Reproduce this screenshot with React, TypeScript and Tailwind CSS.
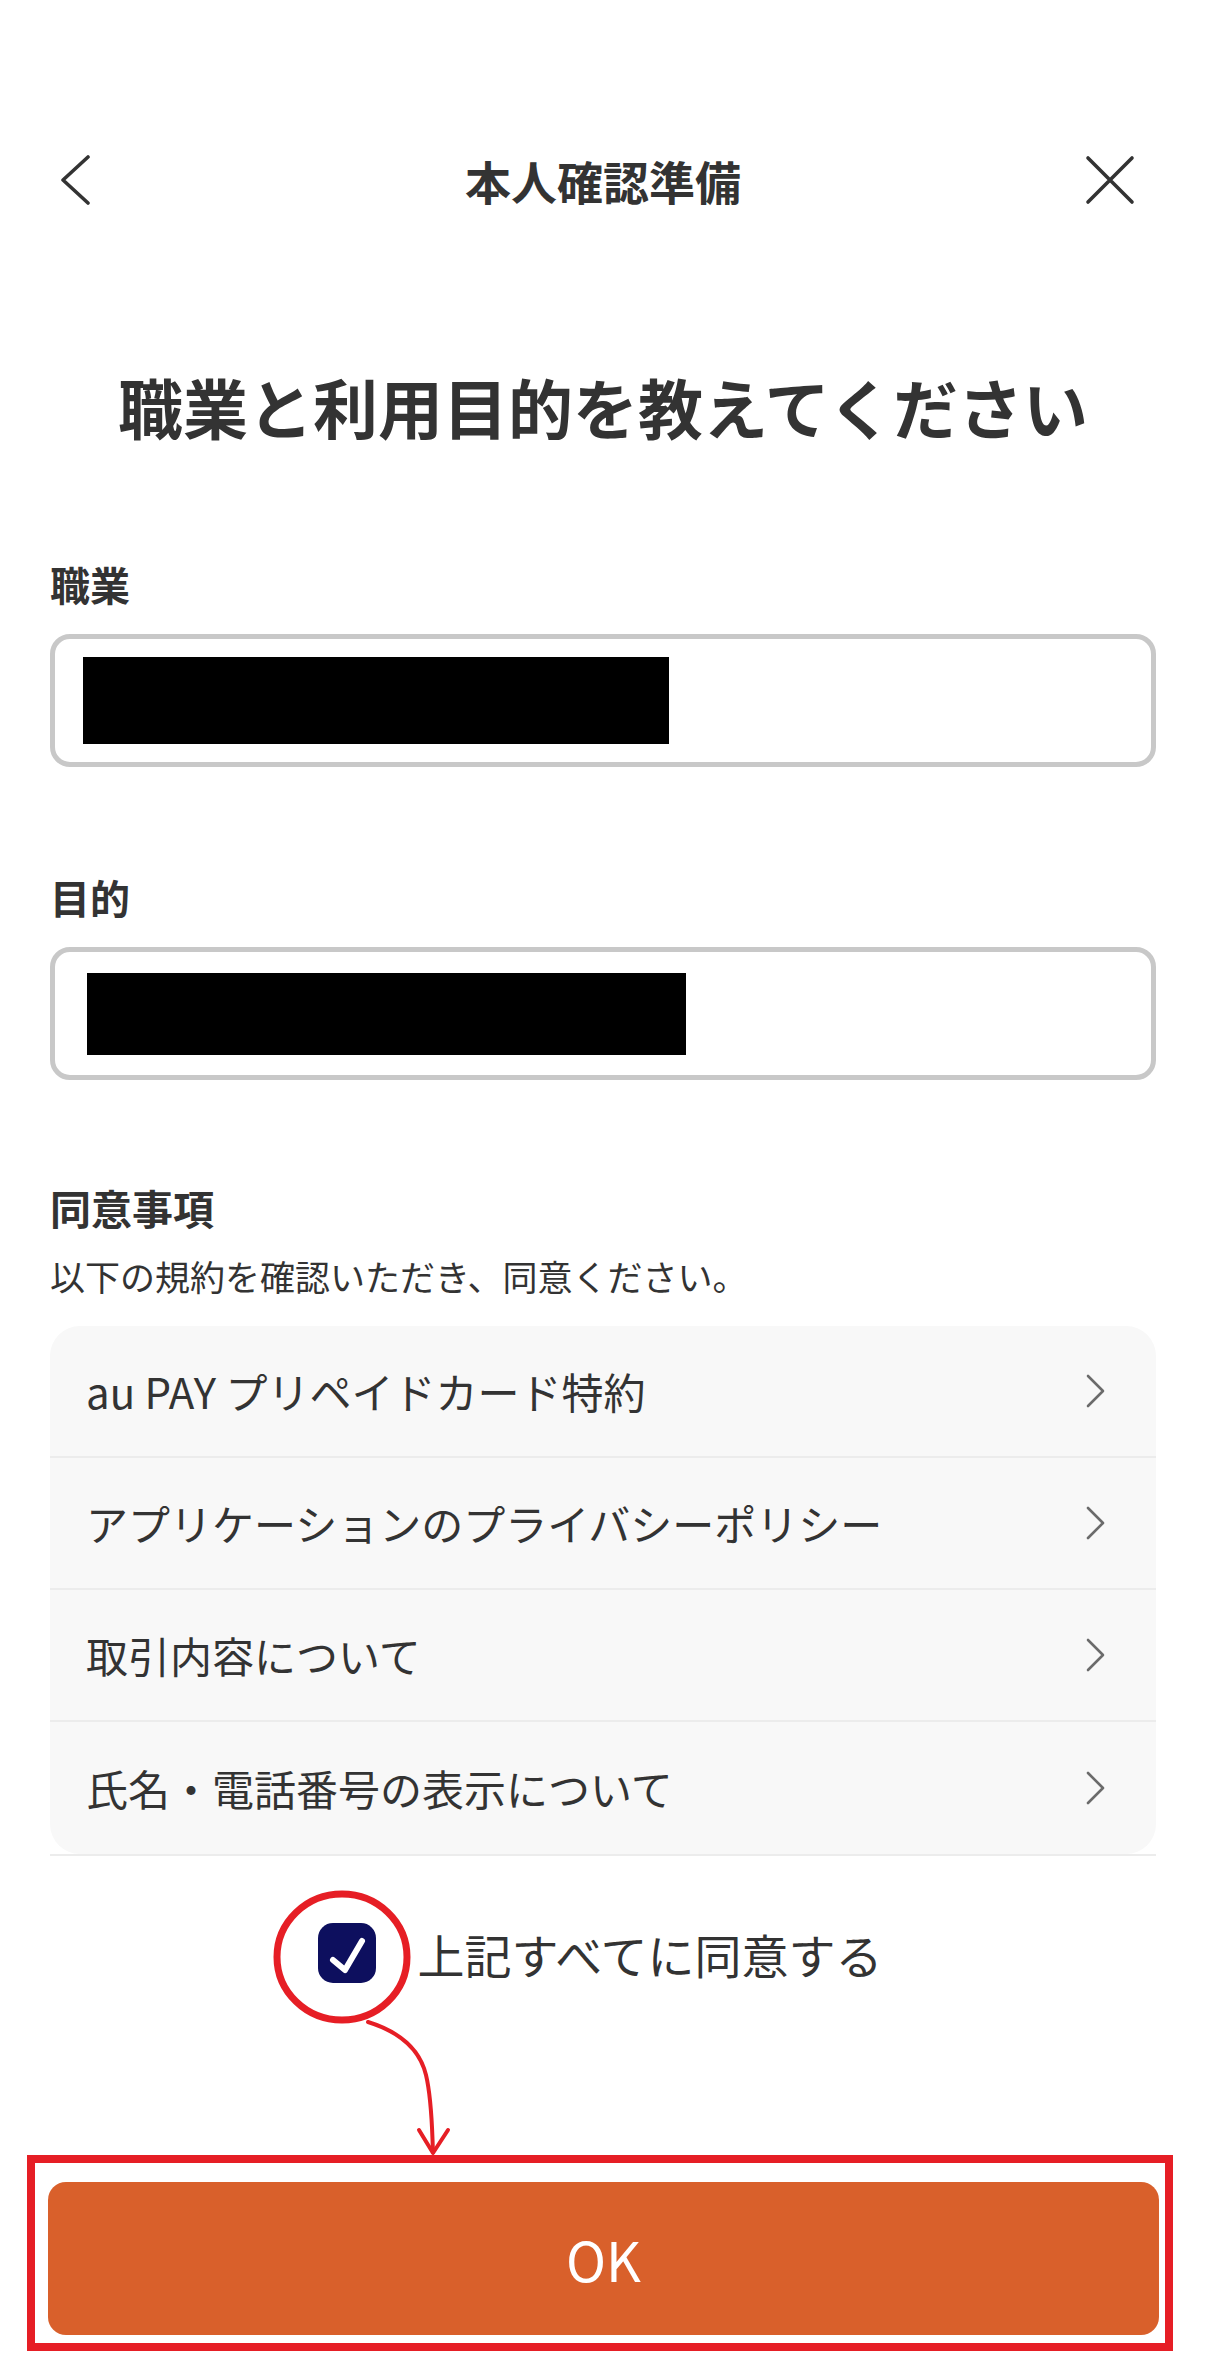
import React, { useState } from "react";

// Terms rows shown in the agreement card
const terms = [
  "au PAY プリペイドカード特約",
  "アプリケーションのプライバシーポリシー",
  "取引内容について",
  "氏名・電話番号の表示について",
];

const ChevronRight = () => (
  <svg width="22" height="34" viewBox="0 0 22 34" fill="none">
    <path d="M3 2 L18 17 L3 32" stroke="#6b6b6b" strokeWidth="2.6" strokeLinecap="round" strokeLinejoin="round" />
  </svg>
);

const TermRow: React.FC<{ label: string; last?: boolean }> = ({ label, last }) => (
  <div
    className={
      "flex items-center justify-between h-[132px] pl-[36px] pr-[49px] " +
      (last ? "" : "border-b-[2px] border-[#ececec]")
    }
  >
    <span className="text-[42px] leading-[42px]">{label}</span>
    <ChevronRight />
  </div>
);

const FormField: React.FC<{ label: string; boxW: string; boxH: string; pl: string }> = ({
  label,
  boxW,
  boxH,
  pl,
}) => (
  <div>
    <p className="text-[40px] leading-[40px] font-bold">{label}</p>
    <div className={"mt-[30px] h-[133px] rounded-[20px] border-[5px] border-[#c8c8c8] flex items-center " + pl}>
      {/* masked value */}
      <div className={"bg-black " + boxW + " " + boxH} />
    </div>
  </div>
);

export default function App() {
  const [agreed, setAgreed] = useState(true);

  return (
    <div className="relative w-[1206px] h-[2358px] overflow-hidden pt-[150px] bg-white text-[#333] font-['Noto_Sans_CJK_JP','Noto_Sans',sans-serif]">
      {/* header */}
      <header className="grid grid-cols-[1fr_auto_1fr] items-center h-[60px] px-[60px]">
        <button className="justify-self-start">
          <svg width="32" height="50" viewBox="0 0 32 50" fill="none">
            <path d="M28 2 L3 25 L28 48" stroke="#333" strokeWidth="3.6" strokeLinecap="round" strokeLinejoin="round" />
          </svg>
        </button>
        <h1 className="text-[46px] leading-[46px] font-bold">本人確認準備</h1>
        <button className="justify-self-end mr-[11px]">
          <svg width="50" height="50" viewBox="0 0 50 50" fill="none">
            <path d="M3 3 L47 47 M47 3 L3 47" stroke="#333" strokeWidth="3.6" strokeLinecap="round" />
          </svg>
        </button>
      </header>

      <h2 className="mt-[163px] text-center text-[65px] leading-[66px] font-bold">職業と利用目的を教えてください</h2>

      <section className="px-[50px]">
        <div className="mt-[125px]">
          <FormField label="職業" boxW="w-[586px]" boxH="h-[87px]" pl="pl-[28px]" />
        </div>
        <div className="mt-[110px]">
          <FormField label="目的" boxW="w-[599px]" boxH="h-[82px]" pl="pl-[32px]" />
        </div>

        <h3 className="mt-[107px] text-[41px] leading-[41px] font-bold">同意事項</h3>
        <p className="mt-[30px] text-[35px] leading-[35px]">以下の規約を確認いただき、同意ください。</p>

        <div className="mt-[33px] rounded-[30px] bg-[#f8f8f8]">
          {terms.map((t, i) => (
            <TermRow key={t} label={t} last={i === terms.length - 1} />
          ))}
        </div>
        <div className="h-[2px] bg-[#ececec]" />

        <label className="mt-[67px] flex items-center justify-center gap-[42px] pr-[6px]">
          <button
            onClick={() => setAgreed(!agreed)}
            className="w-[58px] h-[60px] rounded-[15px] bg-[#0d0f5e] flex items-center justify-center"
          >
            {agreed && (
              <svg width="58" height="60" viewBox="0 0 58 60" fill="none">
                <path d="M15 37 L27 47 L44 18" stroke="#fff" strokeWidth="6" strokeLinecap="round" strokeLinejoin="round" />
              </svg>
            )}
          </button>
          <span className="text-[47px] leading-[47px]">上記すべてに同意する</span>
        </label>
      </section>

      {/* annotated OK button */}
      <div className="mt-[172px] ml-[27px] mr-[33px] border-[8px] border-[#e61e25] pt-[19px] pb-[8px] pl-[13px] pr-[6px]">
        <button className="w-full h-[153px] rounded-[18px] bg-[#d9602b] text-white text-[54px] leading-[54px] font-normal">
          OK
        </button>
      </div>

      {/* hand-drawn annotation circle and arrow */}
      <svg className="pointer-events-none absolute left-0 top-0" width="1206" height="2358" fill="none">
        <ellipse cx="342" cy="1957" rx="65" ry="63" stroke="#e61e25" strokeWidth="7" />
        <path d="M368 2022 C 400 2032, 420 2050, 426 2075 S 432 2130, 433 2152" stroke="#e61e25" strokeWidth="4" strokeLinecap="round" />
        <path d="M419 2130 L433 2153 L448 2130" stroke="#e61e25" strokeWidth="4" strokeLinecap="round" strokeLinejoin="round" />
      </svg>
    </div>
  );
}
